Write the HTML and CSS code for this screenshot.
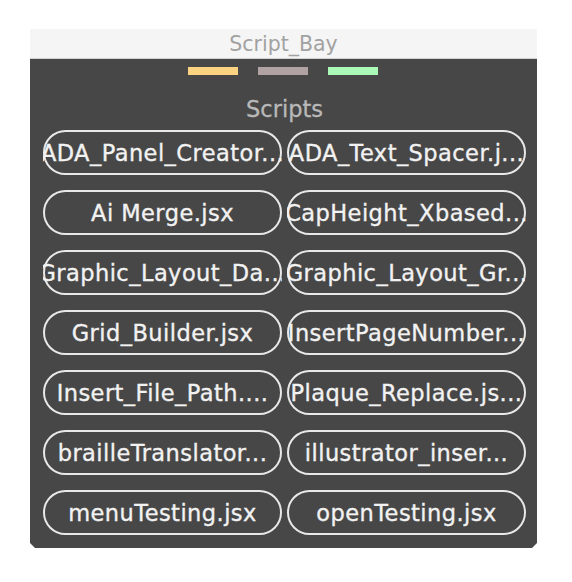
FILE: index.html
```html
<!DOCTYPE html>
<html>
<head>
<meta charset="utf-8">
<link rel="stylesheet" href="styles.css">
</head>
<body>
<div class="window">
  <div class="titlebar">Script_Bay</div>
  <div class="panel">
    <div class="bars">
      <span class="bar bar-yellow"></span>
      <span class="bar bar-mauve"></span>
      <span class="bar bar-green"></span>
    </div>
    <div class="label">Scripts</div>
    <div class="grid">
      <div class="btn"><span class="txt">ADA_Panel_Creator...</span></div>
      <div class="btn"><span class="txt">ADA_Text_Spacer.j...</span></div>
      <div class="btn"><span class="txt">Ai Merge.jsx</span></div>
      <div class="btn"><span class="txt">CapHeight_Xbased...</span></div>
      <div class="btn"><span class="txt">Graphic_Layout_Da...</span></div>
      <div class="btn"><span class="txt">Graphic_Layout_Gr...</span></div>
      <div class="btn"><span class="txt">Grid_Builder.jsx</span></div>
      <div class="btn"><span class="txt">InsertPageNumber...</span></div>
      <div class="btn"><span class="txt">Insert_File_Path....</span></div>
      <div class="btn"><span class="txt">Plaque_Replace.js...</span></div>
      <div class="btn"><span class="txt">brailleTranslator...</span></div>
      <div class="btn"><span class="txt">illustrator_inser...</span></div>
      <div class="btn"><span class="txt">menuTesting.jsx</span></div>
      <div class="btn"><span class="txt">openTesting.jsx</span></div>
    </div>
  </div>
</div>
</body>
</html>
```

FILE: styles.css
```css
html, body {
  margin: 0;
  padding: 0;
  background: #ffffff;
}
body {
  font-family: "DejaVu Sans", "Liberation Sans", sans-serif;
}
.window {
  margin: 29px 0 0 30px;
  width: 507px;
}
.titlebar {
  height: 30px;
  box-sizing: border-box;
  background: #f5f5f5;
  border-bottom: 1px solid #d2d2d2;
  color: #a2a2a2;
  font-size: 20.5px;
  line-height: 30px;
  text-align: center;
}
.panel {
  background: #474747;
  height: 489px;
  box-sizing: border-box;
  padding: 8px 11px 0 13px;
  clip-path: polygon(0 0, 100% 0, 100% calc(100% - 5px), calc(100% - 5px) 100%, 5px 100%, 0 calc(100% - 5px));
}
.bars {
  display: flex;
  justify-content: center;
  gap: 20px;
  margin-left: -3px;
}
.bar {
  width: 50px;
  height: 8px;
}
.bar-yellow { background: #fbd381; }
.bar-mauve { background: #b1a3a3; }
.bar-green { background: #abf9b8; }
.label {
  margin-top: 21px;
  height: 26px;
  line-height: 26px;
  text-align: center;
  color: #b9b9b9;
  font-size: 22.5px;
  -webkit-text-stroke: 0.3px #b9b9b9;
}
.grid {
  margin-top: 8px;
  display: grid;
  grid-template-columns: 239px 239px;
  column-gap: 5px;
  row-gap: 15px;
}
.btn {
  position: relative;
  height: 45px;
  overflow: hidden;
  display: flex;
  justify-content: center;
  align-items: center;
}
.btn::before {
  content: "";
  position: absolute;
  inset: 0;
  border: 2px solid #e8e8e8;
  border-radius: 23px;
}
.txt {
  position: relative;
  white-space: nowrap;
  color: #f2f2f2;
  font-size: 22.5px;
  letter-spacing: 0.45px;
  -webkit-text-stroke: 0.35px #f2f2f2;
  flex-shrink: 0;
}
```
